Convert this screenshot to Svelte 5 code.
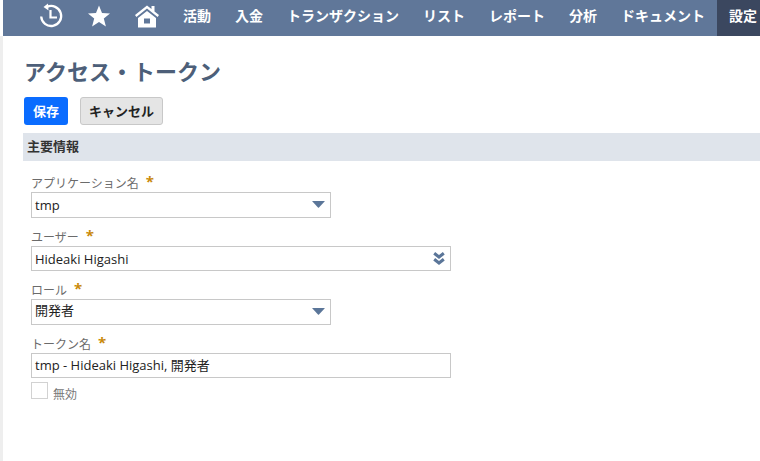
<script>
  const navItems = ['活動', '入金', 'トランザクション', 'リスト', 'レポート', '分析', 'ドキュメント'];
</script>

<div class="page">
  <nav class="nav">
    <div class="icons">
      <svg width="26" height="26" viewBox="0 0 26 26" fill="none" stroke="#fff" stroke-width="2.3">
        <path d="M9 3.9 A10 10 0 1 1 3.2 13.5" />
        <path d="M10 0.5 L5.5 4 L10.5 7.5 Z" fill="#fff" stroke="none" />
        <path d="M12.5 7 V14.5 H19" stroke-width="2.2" />
      </svg>
      <svg width="24" height="24" viewBox="0 0 24 24" fill="#fff">
        <path d="M12 1.5 L15 9 L23 9.4 L16.8 14.5 L18.9 22.4 L12 18 L5.1 22.4 L7.2 14.5 L1 9.4 L9 9 Z" />
      </svg>
      <svg width="26" height="26" viewBox="0 0 26 26" fill="#fff">
        <path d="M13 2.5 L17.5 6 V3 H20.5 V8.4 L25 12 L23.6 14 L13 5.6 L2.4 14 L1 12 Z" />
        <path fill-rule="evenodd" d="M13 8 L22 15 V24.5 H4 V15 Z M10 15.5 V20.5 H16 V15.5 Z" />
      </svg>
    </div>
    {#each navItems as item}
      <span class="nav-item">{item}</span>
    {/each}
    <span class="nav-item active">設定</span>
  </nav>

  <main class="content">
    <h1>アクセス・トークン</h1>
    <div class="actions">
      <button class="save">保存</button>
      <button class="cancel">キャンセル</button>
    </div>
    <div class="section">主要情報</div>

    <div class="form">
      <div class="field">
        <span class="label">アプリケーション名<span class="req">*</span></span>
        <div class="box narrow">tmp
          <svg class="caret" width="13" height="7" viewBox="0 0 13 7"><path d="M0.5 0 H12.5 Q13 0 12.6 0.6 L7 6.6 Q6.5 7 6 6.6 L0.4 0.6 Q0 0 0.5 0 Z" fill="#5b7699" /></svg>
        </div>
      </div>
      <div class="field">
        <span class="label">ユーザー<span class="req">*</span></span>
        <div class="box wide user">Hideaki Higashi
          <svg class="double" width="12" height="13" viewBox="0 0 12 13" fill="none" stroke="#5b7699" stroke-width="3">
            <path d="M1.2 1.2 L6 5 L10.8 1.2" />
            <path d="M1.2 7.2 L6 11 L10.8 7.2" />
          </svg>
        </div>
      </div>
      <div class="field">
        <span class="label">ロール<span class="req">*</span></span>
        <div class="box narrow cjk">開発者
          <svg class="caret" width="13" height="7" viewBox="0 0 13 7"><path d="M0.5 0 H12.5 Q13 0 12.6 0.6 L7 6.6 Q6.5 7 6 6.6 L0.4 0.6 Q0 0 0.5 0 Z" fill="#5b7699" /></svg>
        </div>
      </div>
      <div class="field">
        <span class="label">トークン名<span class="req">*</span></span>
        <div class="box wide">tmp - Hideaki Higashi, 開発者</div>
      </div>
      <div class="check">
        <span class="checkbox"></span>
        <span class="check-label">無効</span>
      </div>
    </div>
  </main>
</div>

<style>
  :global(body) {
    margin: 0;
    background: #fff;
  }

  .page {
    width: 760px;
    height: 461px;
    overflow: hidden;
    font-family: "Open Sans", "Noto Sans CJK JP", sans-serif;
    font-size: 13px;
    color: #222;
  }

  .nav {
    height: 36px;
    margin-left: 3px;
    background: #607799;
    display: flex;
    align-items: center;
  }

  .icons {
    flex: none;
    width: 168px;
    margin-bottom: 4px;
    padding-left: 35px;
    box-sizing: border-box;
    display: flex;
    align-items: center;
    gap: 23px;
  }

  .nav-item {
    height: 36px;
    line-height: 31px;
    padding: 0 12px;
    color: #fff;
    font-family: "Noto Sans CJK JP", sans-serif;
    font-size: 14px;
    font-weight: 700;
    white-space: nowrap;
  }

  .nav-item.active {
    flex: 1;
    background: #3b475f;
  }

  .content {
    margin-left: 3px;
    padding-left: 20px;
    box-shadow: -3px 0 0 #eeeeee;
    height: 425px;
  }

  h1 {
    margin: 0;
    padding: 19px 0 0 1px;
    height: 42px;
    line-height: 30px;
    font-family: "Noto Sans CJK JP", sans-serif;
    font-size: 22px;
    font-weight: 700;
    color: #4d5f79;
  }

  .actions {
    display: flex;
    gap: 12px;
    padding-left: 1px;
  }

  button {
    height: 28px;
    padding: 0 0 2px;
    border-radius: 3px;
    font-family: "Noto Sans CJK JP", sans-serif;
    font-size: 13px;
    font-weight: 700;
    box-sizing: border-box;
  }

  .save {
    width: 44px;
    background: #0a6cff;
    border: 0;
    color: #fff;
  }

  .cancel {
    width: 83px;
    background: #e5e5e5;
    border: 1px solid #c8c8c8;
    color: #222;
  }

  .section {
    margin-top: 8px;
    height: 28px;
    line-height: 26px;
    padding-left: 4px;
    background: #dfe4eb;
    font-family: "Noto Sans CJK JP", sans-serif;
    font-weight: 700;
    font-size: 13px;
    color: #333;
  }

  .form {
    padding: 11px 0 0 8px;
  }

  .field {
    margin-bottom: 8px;
  }

  .label {
    display: block;
    height: 20px;
    line-height: 23px;
    color: #6b6b6b;
    font-size: 12px;
  }

  .req {
    margin-left: 7px;
    color: #c98a0c;
    font-weight: 700;
    font-size: 15px;
    line-height: 16px;
    vertical-align: 1px;
  }

  .box {
    padding-left: 3px;
    box-sizing: border-box;
    border: 1px solid #c8c8c8;
    position: relative;
    color: #222;
  }

  .narrow {
    width: 300px;
    height: 26px;
    line-height: 25px;
  }

  .wide {
    width: 420px;
    height: 25px;
    line-height: 23px;
  }

  .user {
    line-height: 25px;
  }

  .cjk {
    line-height: 21px;
  }

  .caret {
    position: absolute;
    right: 5px;
    top: 8px;
  }

  .double {
    position: absolute;
    right: 5px;
    top: 5px;
  }

  .check {
    display: flex;
    margin-top: -4px;
    gap: 5px;
  }

  .checkbox {
    width: 17px;
    height: 17px;
    box-sizing: border-box;
    border: 1px solid #d2d2d2;
  }

  .check-label {
    margin-top: 4px;
    line-height: 18px;
    font-size: 12px;
    color: #777;
  }
</style>
